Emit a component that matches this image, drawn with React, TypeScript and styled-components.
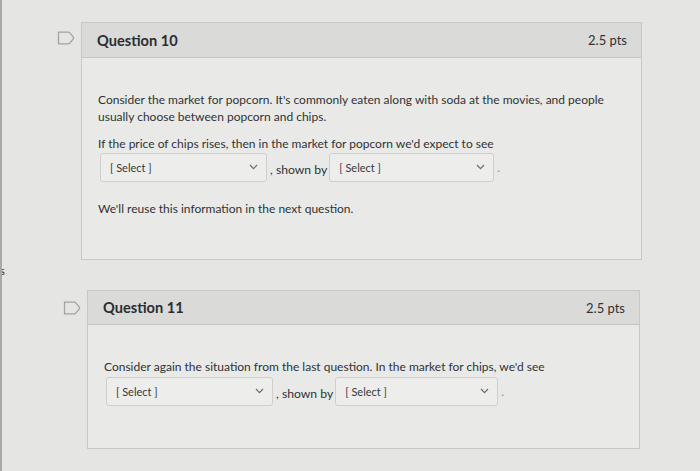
import React from "react";
import styled, { createGlobalStyle } from "styled-components";

const Global = createGlobalStyle`
  html, body { margin: 0; padding: 0; }
  body {
    background: #e5e5e3;
    font-family: Lato, "Open Sans", "Liberation Sans", sans-serif;
    color: #2f3336;
  }
`;

const Page = styled.div`
  display: flex;
  width: 700px;
  height: 471px;
  overflow: hidden;
`;

const Side = styled.div`
  width: 5px;
  flex: none;
  border-left: 2px solid #a9a9a7;
  padding-top: 264px;
  font-size: 11px;
  line-height: 14px;
  color: #2a2a2a;
  overflow: hidden;
  box-sizing: border-box;
  text-indent: -2px;
`;

const Main = styled.div`
  display: flex;
  flex-direction: column;
  gap: 30px;
  padding-top: 22px;
`;

const Row = styled.div<{ $indent: number }>`
  display: flex;
  align-items: flex-start;
  gap: 6px;
  padding-left: ${(p) => p.$indent}px;
`;

const Flag = styled.svg<{ $top: number }>`
  flex: none;
  margin-top: ${(p) => p.$top}px;
`;

const Card = styled.div<{ $width: number }>`
  width: ${(p) => p.$width}px;
  box-sizing: border-box;
  border: 1px solid #c8c8c6;
  background: #e9e9e7;
`;

const Header = styled.div<{ $height: number }>`
  height: ${(p) => p.$height}px;
  box-sizing: border-box;
  display: flex;
  align-items: center;
  justify-content: space-between;
  padding: 0 14px 0 15px;
  background: #dadad8;
  border-bottom: 1px solid #c5c5c3;
`;

const Title = styled.div`
  font-size: 14.6px;
  font-weight: 700;
  color: #2a2e32;
`;

const Points = styled.div`
  font-size: 13px;
  color: #2f3336;
`;

const Body = styled.div<{ $top: number; $bottom: number }>`
  padding: ${(p) => p.$top}px 16px ${(p) => p.$bottom}px 16px;
  font-size: 12px;
  line-height: 17px;
`;

const Para = styled.p<{ $gap?: number }>`
  margin: 0 0 ${(p) => p.$gap ?? 0}px 0;
`;

const SelectLine = styled.div<{ $top: number; $gap: number }>`
  display: flex;
  align-items: center;
  margin: ${(p) => p.$top}px 0 ${(p) => p.$gap}px 2px;
`;

const SelectBox = styled.div<{ $width: number }>`
  width: ${(p) => p.$width}px;
  height: 29px;
  box-sizing: border-box;
  display: flex;
  align-items: center;
  justify-content: space-between;
  padding: 0 8px 1px 9px;
  background: #ededeb;
  border: 1px solid #cfcfcd;
  border-radius: 3px;
  font-size: 11px;
  color: #363a3d;
`;

const Joiner = styled.span`
  padding: 3px 2px 0 3px;
  font-size: 12.2px;
`;

const Dot = styled.span`
  padding: 0 0 0 3px;
  color: #8a8a8a;
`;

const TagIcon = ({ top }: { top: number }) => (
  <Flag $top={top} width="18" height="14" viewBox="0 0 18 14">
    <path
      d="M1.5 1.2 H11.4 Q12.2 1.2 12.8 1.9 L16.3 6.1 Q16.9 7 16.3 7.9 L12.8 12.1 Q12.2 12.8 11.4 12.8 H1.5 Z"
      fill="none"
      stroke="#a3a3a1"
      strokeWidth="1.3"
      strokeLinejoin="round"
    />
  </Flag>
);

const Chevron = () => (
  <svg width="9" height="6" viewBox="0 0 9 6">
    <polyline points="1,1 4.5,4.6 8,1" fill="none" stroke="#6a6e72" strokeWidth="1.2" />
  </svg>
);

const Select = ({ width }: { width: number }) => (
  <SelectBox $width={width}>
    <span>[ Select ]</span>
    <Chevron />
  </SelectBox>
);

const SelectPair = ({ a, b, top, gap }: { a: number; b: number; top: number; gap: number }) => (
  <SelectLine $top={top} $gap={gap}>
    <Select width={a} />
    <Joiner>, shown by</Joiner>
    <Select width={b} />
    <Dot>.</Dot>
  </SelectLine>
);

export default function App() {
  return (
    <Page>
      <Global />
      <Side>s</Side>
      <Main>
        <Row $indent={52}>
          <TagIcon top={9} />
          <Card $width={561}>
            <Header $height={35}>
              <Title>Question 10</Title>
              <Points>2.5 pts</Points>
            </Header>
            <Body $top={33} $bottom={42}>
              <Para $gap={10}>
                Consider the market for popcorn. It's commonly eaten along with soda at the movies, and people
                usually choose between popcorn and chips.
              </Para>
              <Para>If the price of chips rises, then in the market for popcorn we'd expect to see</Para>
              <SelectPair a={167} b={165} top={1} gap={18} />
              <Para>We'll reuse this information in the next question.</Para>
            </Body>
          </Card>
        </Row>
        <Row $indent={58}>
          <TagIcon top={11} />
          <Card $width={553}>
            <Header $height={34}>
              <Title>Question 11</Title>
              <Points>2.5 pts</Points>
            </Header>
            <Body $top={33} $bottom={42}>
              <Para>Consider again the situation from the last question. In the market for chips, we'd see</Para>
              <SelectPair a={167} b={163} top={2} gap={0} />
            </Body>
          </Card>
        </Row>
      </Main>
    </Page>
  );
}
